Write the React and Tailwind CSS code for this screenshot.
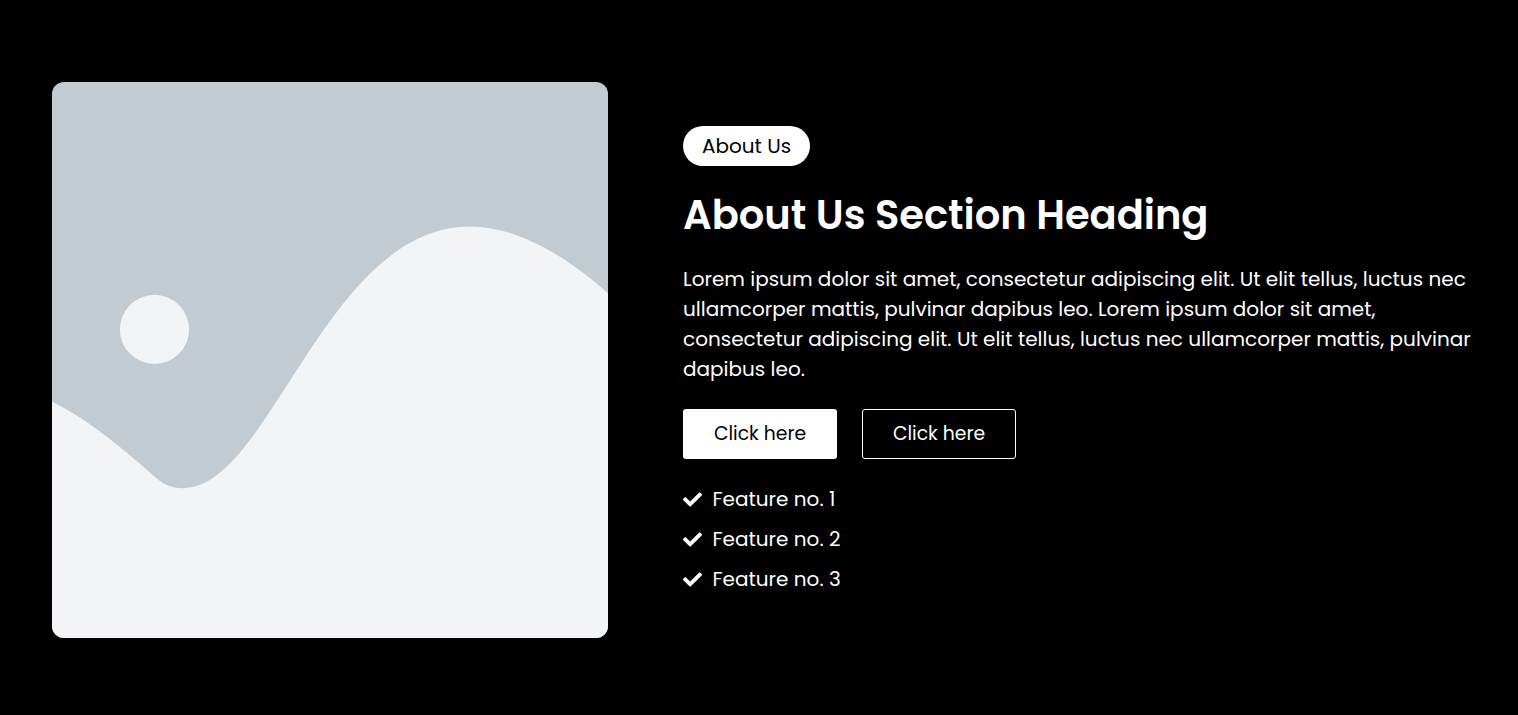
import React from 'react';
import { FaCheck } from 'react-icons/fa';

const features = ['Feature no. 1', 'Feature no. 2', 'Feature no. 3'];

function Placeholder() {
    return (
        <svg viewBox="0 0 556 556" className="w-[556px] h-[556px] rounded-xl shrink-0">
            <rect width="556" height="556" fill="#c3cbd2" />
            <circle cx="102.5" cy="247.4" r="34.6" fill="#f2f4f6" />
            <path
                d="M0 319.500C40 339.500 73 369 106 397.500C113 403.500 122 406.200 131 406.200C218 406.200 274 144.500 418 144.500C466 144.500 517 176 556 211.500V556H0Z"
                fill="#f2f4f6"
            />
        </svg>
    );
}

export default function App() {
    return (
        <section className="flex items-start h-[715px] bg-black text-white pl-[52px] pt-[82px] gap-[75px] overflow-hidden font-['Poppins','Open_Sans',sans-serif]">
            <Placeholder />
            <div className="flex flex-col items-start w-[790px] shrink-0 pt-11">
                <span className="flex items-center justify-center w-[127px] h-10 rounded-full bg-white text-black text-xl whitespace-nowrap">
                    About Us
                </span>
                <h1 className="mt-6 text-[40px] leading-[50px] font-semibold whitespace-nowrap">
                    About Us Section Heading
                </h1>
                <p className="mt-6 text-xl leading-[30px]">
                    Lorem ipsum dolor sit amet, consectetur adipiscing elit. Ut elit tellus, luctus nec
                    ullamcorper mattis, pulvinar dapibus leo. Lorem ipsum dolor sit amet,
                    consectetur adipiscing elit. Ut elit tellus, luctus nec ullamcorper mattis, pulvinar
                    dapibus leo.
                </p>
                <div className="flex gap-[25px] mt-[25px]">
                    <button className="w-[154px] h-[50px] rounded-[3px] bg-white text-black text-[18.8px]">Click here</button>
                    <button className="w-[154px] h-[50px] rounded-[3px] border border-white text-[18.8px]">Click here</button>
                </div>
                <ul className="mt-[25px] space-y-2.5">
                    {features.map((feature) => (
                        <li key={feature} className="flex items-center gap-[10.5px] h-[30px] text-xl">
                            <FaCheck size={19} />
                            {feature}
                        </li>
                    ))}
                </ul>
            </div>
        </section>
    );
}
